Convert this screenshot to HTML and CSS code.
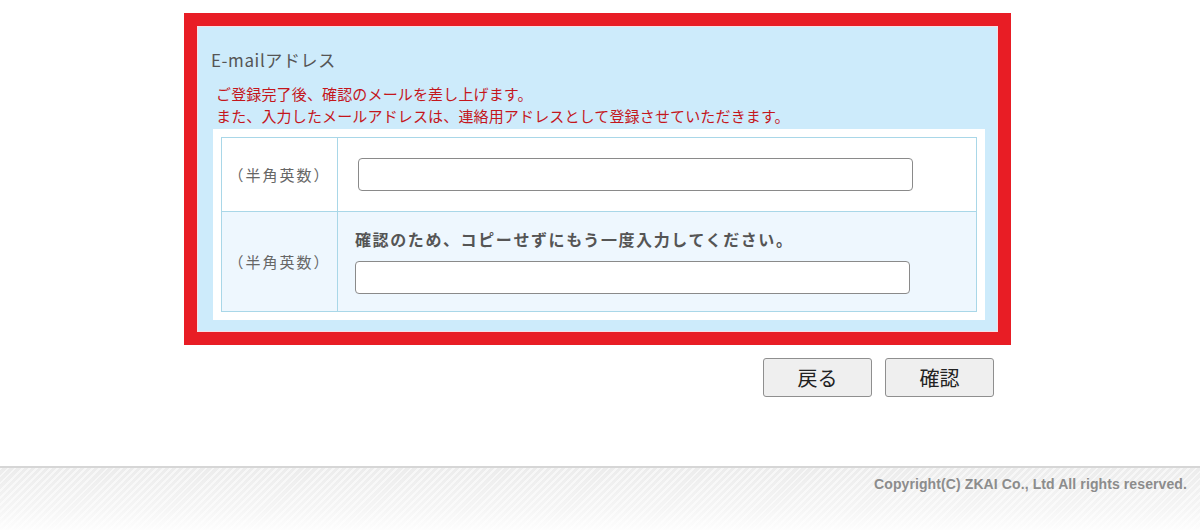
FILE: index.html
```html
<!DOCTYPE html>
<html lang="ja">
<head>
<meta charset="utf-8">
<title>E-mailアドレス</title>
<link rel="stylesheet" href="styles.css">
</head>
<body>
<main class="page">
  <section class="box">
    <h2 class="heading">E-mailアドレス</h2>
    <p class="note">ご登録完了後、確認のメールを差し上げます。<br>また、入力したメールアドレスは、連絡用アドレスとして登録させていただきます。</p>
    <div class="sheet">
      <table class="form">
        <tr class="row1">
          <th class="label">（半角英数）</th>
          <td class="field"><input class="text" type="text"></td>
        </tr>
        <tr class="row2">
          <th class="label">（半角英数）</th>
          <td class="field">
            <p class="hint">確認のため、コピーせずにもう一度入力してください。</p>
            <input class="text text2" type="text">
          </td>
        </tr>
      </table>
    </div>
  </section>
  <div class="actions">
    <button class="btn" type="button">戻る</button>
    <button class="btn" type="button">確認</button>
  </div>
</main>
<footer class="footer">
  <p class="copy">Copyright(C) ZKAI Co., Ltd All rights reserved.</p>
</footer>
</body>
</html>
```
FILE: styles.css
```css
html, body {
  margin: 0;
  padding: 0;
  background: #fff;
}
body {
  font-family: "Noto Sans CJK JP", "Noto Sans", sans-serif;
  color: #555;
  width: 1200px;
  height: 530px;
  overflow: hidden;
}
.page {
  width: 827px;
  margin-left: 184px;
  padding-top: 13px;
}
.box {
  border: 13px solid #e81d25;
  background: #cdebfb;
  box-shadow: inset 0 0 0 1px #f7dfe4;
  padding: 22px 13px 12px 16px;
}
.heading {
  margin: 0 0 11px -2px;
  font-size: 17px;
  line-height: 24px;
  font-weight: normal;
  letter-spacing: 0.6px;
  color: #555;
}
.note {
  margin: 0 0 2px 3px;
  font-size: 15px;
  line-height: 22px;
  letter-spacing: 0.15px;
  color: #c4161c;
}
.sheet {
  background: #fff;
  padding: 8px;
}
.form {
  width: 100%;
  border-collapse: collapse;
  border: 1px solid #a9d7e8;
}
.form th, .form td {
  border: 1px solid #a9d7e8;
}
.label {
  width: 115px;
  font-size: 15px;
  font-weight: normal;
  letter-spacing: 2px;
  color: #666;
  text-align: center;
  padding: 0;
}
.row1 {
  height: 74px;
  background: #fff;
}
.row2 {
  height: 100px;
  background: #eef7fe;
}
.field {
  padding: 0;
  vertical-align: middle;
}
.row1 .field {
  padding-left: 20px;
}
.row2 .field {
  padding: 14px 0 16px 17px;
}
.hint {
  margin: 0 0 10px 0;
  font-size: 16px;
  line-height: 24px;
  font-weight: bold;
  letter-spacing: 1.6px;
  color: #555;
}
.text {
  display: block;
  box-sizing: border-box;
  width: 555px;
  height: 33px;
  border: 1px solid #8a8a8a;
  border-radius: 4px;
  background: #fff;
  margin: 0;
  padding: 0 6px;
}
.actions {
  display: flex;
  justify-content: flex-end;
  gap: 13px;
  padding: 13px 17px 0 0;
}
.btn {
  box-sizing: border-box;
  width: 109px;
  height: 39px;
  border: 1px solid #8f8f8f;
  border-radius: 3px;
  background: #efefef;
  font-family: "Noto Sans CJK JP", sans-serif;
  font-size: 20px;
  line-height: 1;
  color: #222;
  padding: 0;
}
.footer {
  margin-top: 69px;
  border-top: 2px solid #d6d6d6;
  height: 62px;
  background:
    repeating-linear-gradient(135deg, rgba(255,255,255,0.55) 0 2px, rgba(255,255,255,0) 2px 5px),
    linear-gradient(#ececec, #f6f6f6 70%, #fdfdfd);
  display: flex;
  justify-content: flex-end;
}
.copy {
  margin: 8px 13px 0 0;
  font-family: "Liberation Sans", Arial, sans-serif;
  font-size: 14px;
  font-weight: bold;
  letter-spacing: 0.1px;
  line-height: 16px;
  color: #8c8c8c;
}
```
